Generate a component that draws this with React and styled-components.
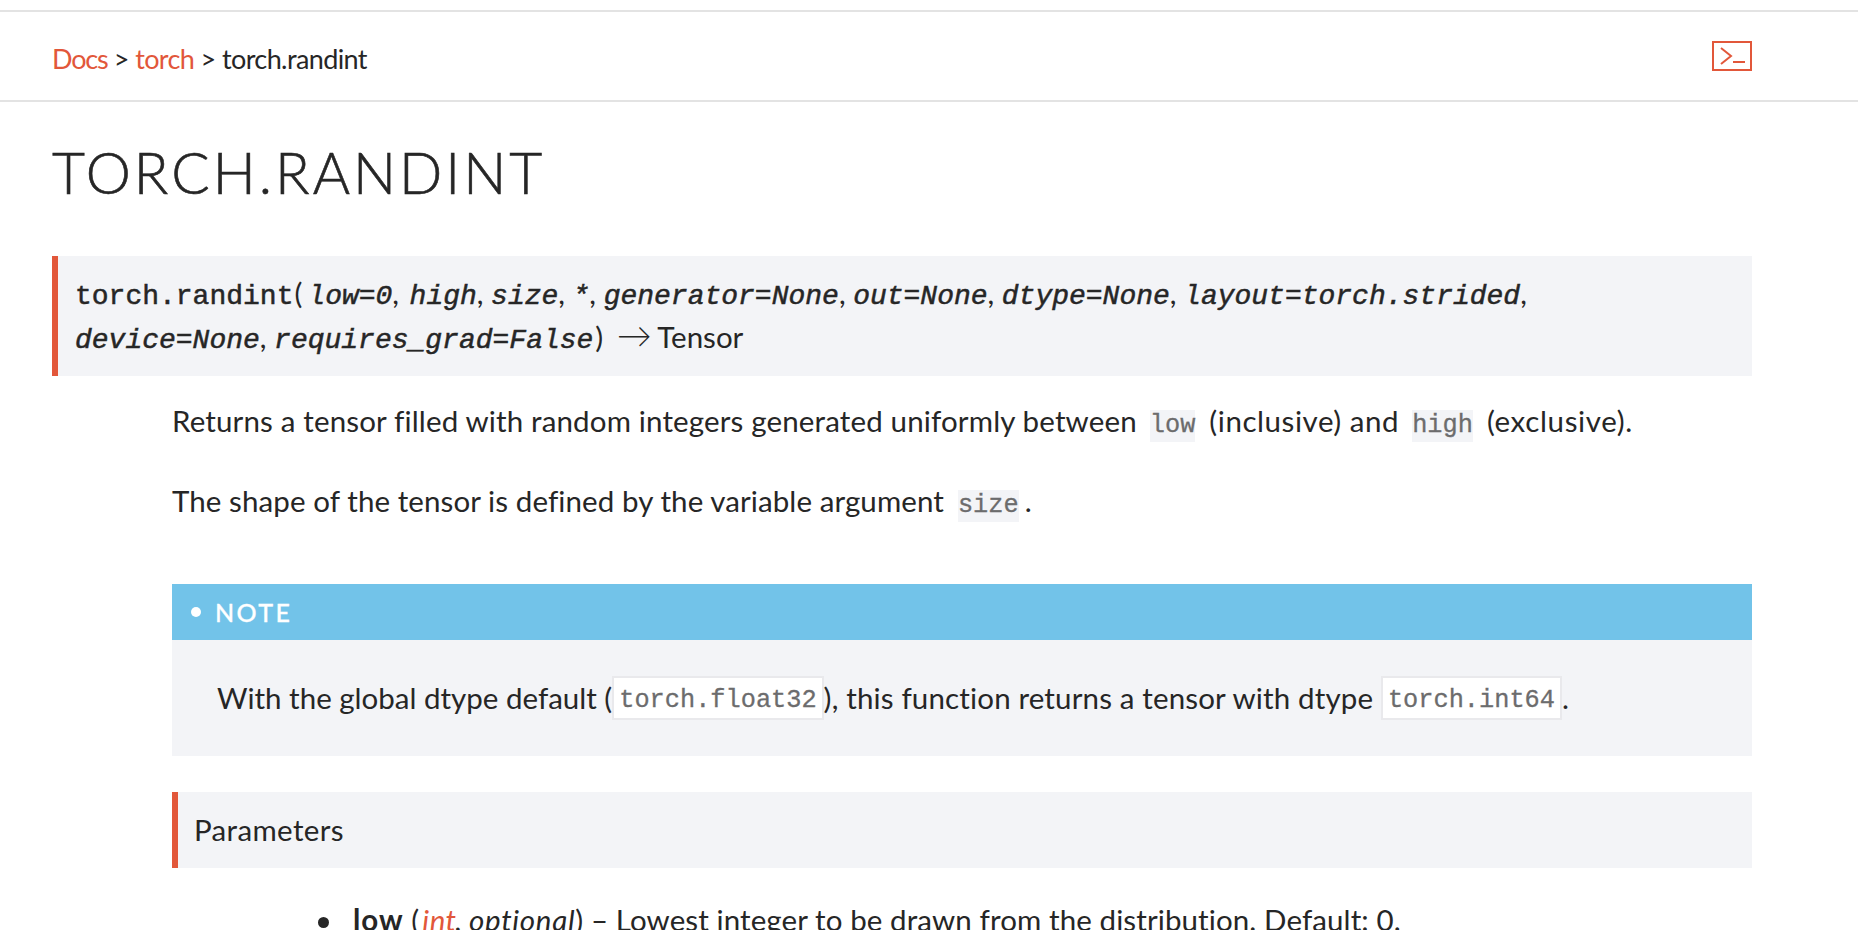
import React from "react";
import styled, { createGlobalStyle } from "styled-components";

const Global = createGlobalStyle`
  html, body { margin: 0; padding: 0; height: 930px; overflow: hidden; background: #fff; }
  body { font-family: Lato, "Noto Sans", sans-serif; color: #262626; }
`;

const ACCENT = "#e2573a";
const MONO = `"Liberation Mono", "DejaVu Sans Mono", monospace`;

const Page = styled.div`
  padding: 10px 106px 0 52px;
  display: flex;
  flex-direction: column;
`;
const Bar = styled.header`
  margin: 0 -106px 0 -52px;
  padding: 0 106px 0 52px;
  height: 88px;
  border-top: 2px solid #e3e3e3;
  border-bottom: 2px solid #e3e3e3;
  display: flex;
  align-items: center;
  justify-content: space-between;
`;
const Crumbs = styled.nav`
  font-size: 27px;
  letter-spacing: -0.6px;
  line-height: 30px;
  margin-top: 6px;
  white-space: pre;
`;
const CrumbLink = styled.span`
  color: ${ACCENT};
  letter-spacing: ${(p) => p.$ls ?? -0.6}px;
`;
const TerminalButton = styled.div`
  width: 40px;
  height: 30px;
  display: flex;
`;
const Title = styled.h1`
  margin: 38px 0 52px;
  font-size: 57px;
  line-height: 64px;
  font-weight: 300;
  letter-spacing: 3px;
  color: #262626;
  -webkit-text-stroke: 0.6px #262626;
`;
const Signature = styled.div`
  background: #f3f4f7;
  border-left: 6px solid ${ACCENT};
  padding: 15px 17px 8px;
  height: 97px;
  font-size: 29.5px;
  line-height: 44px;
  white-space: nowrap;
`;
const SigName = styled.span`
  font-family: ${MONO};
  font-size: 28px;
  line-height: 1;
  font-weight: 400;
  -webkit-text-stroke: 0.5px #262626;
`;
const SigParen = styled.span`
  margin: 0 ${(p) => p.$right}px 0 ${(p) => p.$left}px;
`;
const SigParam = styled.em`
  font-family: ${MONO};
  font-size: 28px;
  line-height: 1;
  margin-right: ${(p) => p.$after || 0}px;
  -webkit-text-stroke: 0.5px #262626;
`;
const Arrow = styled.span`
  font-size: 35px;
  line-height: 1;
  font-weight: 300;
  margin: 0 -4px 0 4px;
`;
const Body = styled.div`
  margin-left: 120px;
  display: flex;
  flex-direction: column;
`;
const Para = styled.p`
  margin: ${(p) => p.$top}px 0 0;
  height: 40px;
  font-size: 29.5px;
  line-height: 40px;
  letter-spacing: ${(p) => p.$ls}px;
  white-space: nowrap;
`;
const Spaced = styled.span`
  letter-spacing: ${(p) => p.$ls}px;
`;
const Code = styled.code`
  font-family: ${MONO};
  font-size: 25.3px;
  letter-spacing: 0;
  color: #6c6c6d;
  background: #f3f4f7;
  display: inline-block;
  line-height: 32px;
  margin: 0 ${(p) => p.$right}px 0 ${(p) => p.$left}px;
  -webkit-text-stroke: 0.3px #6c6c6d;
`;
const Note = styled.section`
  margin-top: 63px;
  background: #f3f4f7;
  height: 172px;
`;
const NoteHead = styled.div`
  height: 56px;
  background: #72c3e9;
  color: #fff;
  display: flex;
  align-items: center;
  padding-left: 19px;
  gap: 14px;
  font-size: 25px;
  letter-spacing: 2.4px;
  font-weight: 500;
  -webkit-text-stroke: 0.3px #fff;
`;
const Dot = styled.span`
  width: 10px;
  height: 10px;
  border-radius: 50%;
  background: #fff;
`;
const NoteText = styled.p`
  margin: 36px 0 0 45px;
  height: 44px;
  font-size: 29.5px;
  line-height: 44px;
  letter-spacing: 0.15px;
  white-space: nowrap;
`;
const BoxCode = styled.code`
  font-family: ${MONO};
  font-size: 25.3px;
  letter-spacing: 0;
  color: #6c6c6d;
  background: #fff;
  border: 2px solid #e9e9ec;
  box-sizing: border-box;
  display: inline-block;
  height: 44px;
  line-height: 45px;
  padding: 0 5px;
  vertical-align: top;
  -webkit-text-stroke: 0.3px #6c6c6d;
`;
const Parameters = styled.div`
  margin-top: 36px;
  height: 76px;
  box-sizing: border-box;
  background: #f3f4f7;
  border-left: 6px solid ${ACCENT};
  padding: 0 0 2px 16px;
  display: flex;
  align-items: center;
  font-size: 29.5px;
  letter-spacing: 0.35px;
`;
const ParamList = styled.ul`
  margin: 30px 0 0;
  padding: 0 0 0 181px;
  font-size: 29.5px;
  line-height: 44px;
  white-space: nowrap;
  letter-spacing: 0.1px;
  list-style: none;
`;
const ParamItem = styled.li`
  position: relative;
  &::before {
    content: "";
    position: absolute;
    left: -35px;
    top: 19px;
    width: 11px;
    height: 11px;
    border-radius: 50%;
    background: #262626;
  }
`;
const ParamName = styled.strong`
  font-weight: 700;
  letter-spacing: 1px;
`;
const TypeLink = styled.em`
  color: ${ACCENT};
  margin: 0 -2px 0 3px;
  letter-spacing: 0.5px;
`;
const Optional = styled.em`
  letter-spacing: 0.7px;
`;

export default function App() {
  return (
    <Page>
      <Global />
      <Bar>
        <Crumbs>
          <CrumbLink $ls={-1.2}>Docs</CrumbLink> &gt; <CrumbLink>torch</CrumbLink> &gt; torch.randint
        </Crumbs>
        <TerminalButton>
          <svg width="40" height="30" viewBox="0 0 40 30" fill="none" stroke={ACCENT}>
            <rect x="1" y="1" width="38" height="28" strokeWidth="2" />
            <path d="M9 7l10 8-10 8" strokeWidth="2" />
            <path d="M21 21h12" strokeWidth="2" />
          </svg>
        </TerminalButton>
      </Bar>
      <Title>TORCH.RANDINT</Title>
      <Signature>
        <SigName>torch.randint</SigName>
        <SigParen $left={1} $right={6}>(</SigParen>
        <SigParam $after={0}>low=0</SigParam><Spaced $ls={3}>,</Spaced> <SigParam>high</SigParam>, <SigParam>size</SigParam>, <SigParam>*</SigParam>,{" "}
        <SigParam>generator=None</SigParam>, <SigParam>out=None</SigParam>, <SigParam>dtype=None</SigParam>,{" "}
        <SigParam>layout=torch.strided</SigParam>,
        <br />
        <SigParam>device=None</SigParam>, <SigParam $after={2}>requires_grad=False</SigParam>)<Arrow> → </Arrow>Tensor
      </Signature>
      <Body>
        <Para $top={25} $ls={0.15}>
          Returns a tensor filled with random integers generated uniformly between<Code $left={13} $right={14}>low</Code><Spaced $ls={0.55}>(inclusive) and</Spaced><Code $left={13} $right={14}>high</Code><Spaced $ls={0.65}>(exclusive).</Spaced>
        </Para>
        <Para $top={40} $ls={0.09}>
          The shape of the tensor is defined by the variable argument<Code $left={14} $right={6}>size</Code>.
        </Para>
        <Note>
          <NoteHead>
            <Dot />
            NOTE
          </NoteHead>
          <NoteText>
            <Spaced $ls={0}>With the global dtype default (</Spaced><BoxCode>torch.float32</BoxCode>), this function returns a tensor with dtype <BoxCode>torch.int64</BoxCode>.
          </NoteText>
        </Note>
        <Parameters>Parameters</Parameters>
        <ParamList>
          <ParamItem>
            <ParamName>low</ParamName> (<TypeLink>int</TypeLink>, <Optional>optional</Optional>) – Lowest integer to be drawn from the distribution. Default: 0.
          </ParamItem>
        </ParamList>
      </Body>
    </Page>
  );
}
